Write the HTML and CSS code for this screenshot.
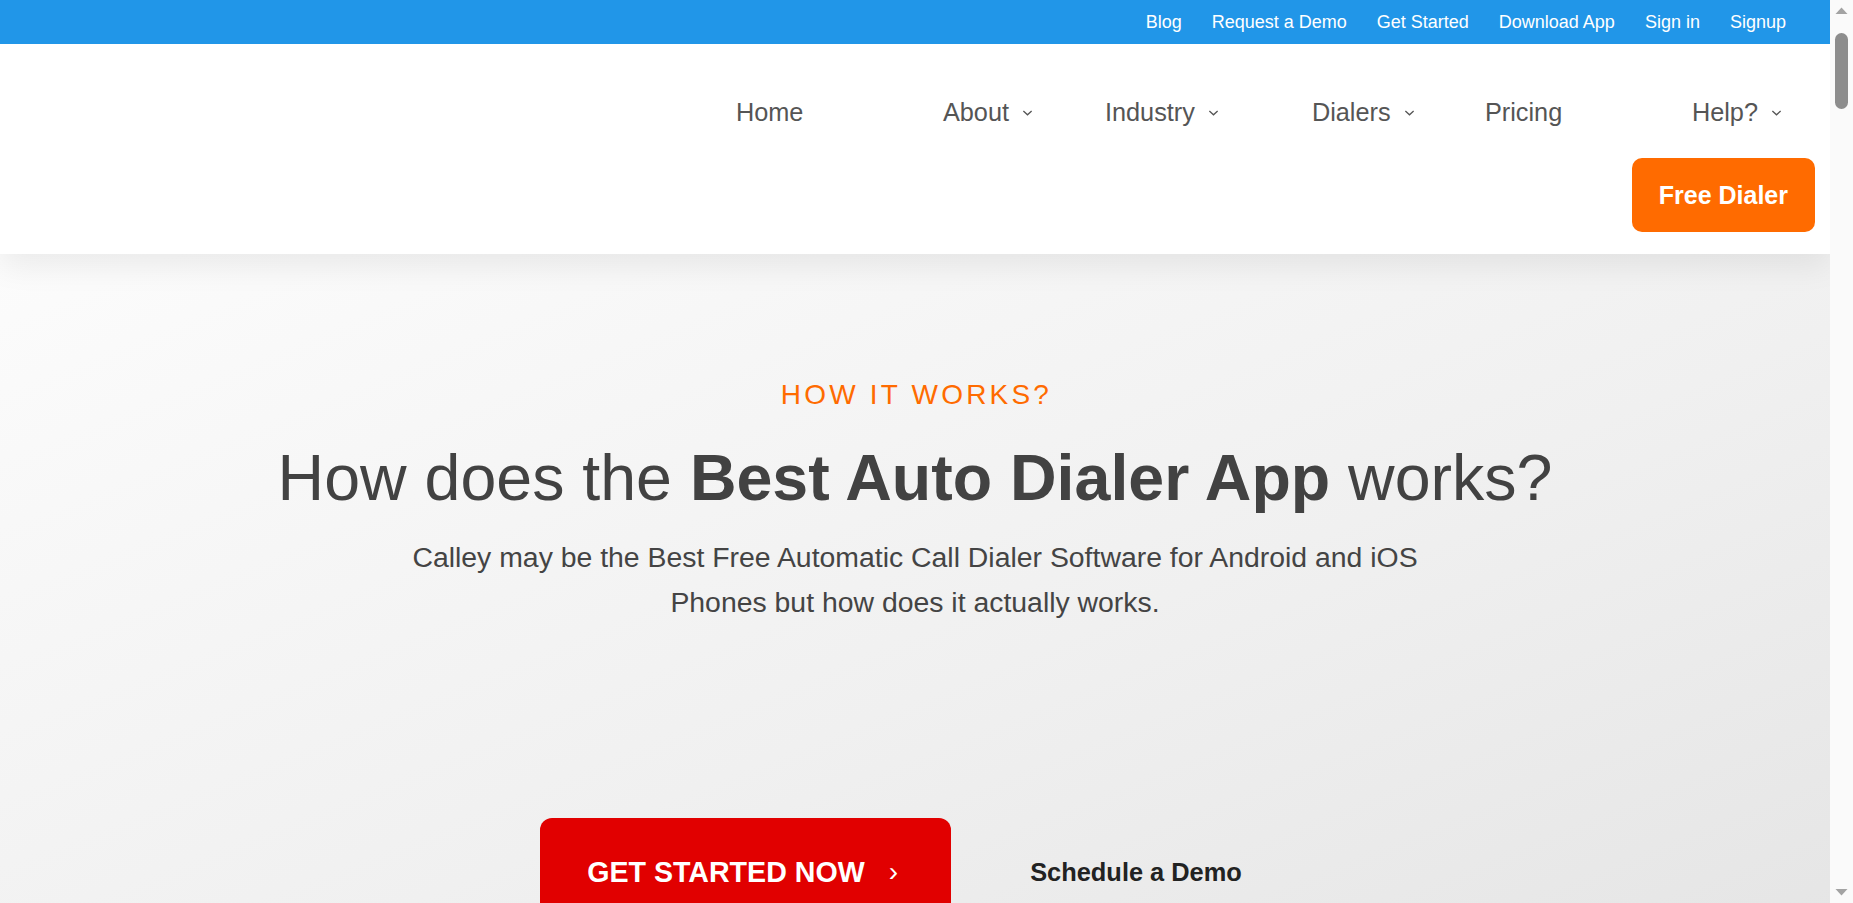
FILE: index.html
```html
<!DOCTYPE html>
<html lang="en">
<head>
<meta charset="utf-8">
<title>Calley - How it works</title>
<link rel="stylesheet" href="styles.css">
</head>
<body>
<header class="site-header">
  <div class="topbar">
    <a href="#">Blog</a>
    <a href="#">Request a Demo</a>
    <a href="#">Get Started</a>
    <a href="#">Download App</a>
    <a href="#">Sign in</a>
    <a href="#">Signup</a>
  </div>
  <nav class="mainnav">
    <ul class="menu">
      <li><a href="#">Home</a></li>
      <li><a href="#">About</a><svg class="chev" viewBox="0 0 12 8"><path d="M1.5 1.8 L6 6 L10.5 1.8"/></svg></li>
      <li><a href="#">Industry</a><svg class="chev" viewBox="0 0 12 8"><path d="M1.5 1.8 L6 6 L10.5 1.8"/></svg></li>
      <li><a href="#">Dialers</a><svg class="chev" viewBox="0 0 12 8"><path d="M1.5 1.8 L6 6 L10.5 1.8"/></svg></li>
      <li><a href="#">Pricing</a></li>
      <li><a href="#">Help?</a><svg class="chev" viewBox="0 0 12 8"><path d="M1.5 1.8 L6 6 L10.5 1.8"/></svg></li>
    </ul>
    <a class="free-btn" href="#">Free Dialer</a>
  </nav>
</header>
<main>
  <section class="hero">
    <p class="eyebrow">HOW IT WORKS?</p>
    <h1 class="title">How does the <strong>Best Auto Dialer App</strong> works?</h1>
    <p class="lead">Calley may be the Best Free Automatic Call Dialer Software for Android and iOS Phones but how does it actually works.</p>
    <div class="actions">
      <a class="start-btn" href="#">GET STARTED NOW <span class="arrow">›</span></a>
      <a class="demo-link" href="#">Schedule a Demo</a>
    </div>
  </section>
</main>
<div class="scrollbar" aria-hidden="true">
  <svg class="sb-arrow" viewBox="0 0 23 20"><path d="M5.5 14 L11.5 7.5 L17.5 14 Z"/></svg>
  <div class="sb-track"><div class="sb-thumb"></div></div>
  <svg class="sb-arrow" viewBox="0 0 23 20"><path d="M5.5 6 L11.5 12.5 L17.5 6 Z"/></svg>
</div>
</body>
</html>
```
FILE: styles.css
```css
* { box-sizing: border-box; }
html, body { margin: 0; padding: 0; }
body {
  font-family: "Liberation Sans", Arial, sans-serif;
  color: #444;
  background: #fff;
  margin-right: 23px;
}
a { text-decoration: none; color: inherit; }

/* imitation of the browser's classic scrollbar */
.scrollbar {
  position: fixed;
  top: 0;
  right: 0;
  width: 23px;
  height: 100vh;
  z-index: 10;
  background: #fafafa;
  display: flex;
  flex-direction: column;
}
.sb-arrow {
  width: 23px;
  height: 20px;
  fill: #a3a3a3;
  flex: none;
}
.sb-track {
  flex: 1;
  padding: 13px 0 0 5px;
}
.sb-thumb {
  width: 13px;
  height: 76px;
  border-radius: 7px;
  background: #8d8d8d;
}

.site-header {
  position: relative;
  z-index: 2;
  background: #fff;
  box-shadow: 0 12px 30px rgba(0, 0, 0, 0.07);
}

.topbar {
  height: 44px;
  background: #2196e8;
  display: flex;
  justify-content: flex-end;
  align-items: center;
  gap: 30px;
  padding-right: 44px;
}
.topbar a {
  color: #fff;
  font-size: 18px;
}

.mainnav {
  height: 210px;
  display: flex;
  flex-direction: column;
  align-items: flex-end;
  padding-top: 54px;
}
.menu {
  list-style: none;
  margin: 0;
  padding: 0 48px 0 0;
  display: grid;
  grid-template-columns: 207px 162px 207px 173px 207px auto;
}
.menu li {
  display: flex;
  align-items: center;
  gap: 13px;
  font-size: 25.3px;
  line-height: 29px;
  color: #555;
}
.chev {
  width: 11px;
  height: 8px;
  fill: none;
  stroke: #555;
  stroke-width: 1.4;
}
.free-btn {
  margin-top: 31px;
  margin-right: 15px;
  height: 74px;
  line-height: 74px;
  padding: 0 27px;
  border-radius: 10px;
  background: #ff6b00;
  color: #fff;
  font-weight: bold;
  font-size: 25px;
}

.hero {
  height: 740px;
  background: linear-gradient(to bottom right, #fcfcfc 0%, #f0f0f0 55%, #e4e4e4 100%);
  padding-top: 124px;
  display: flex;
  flex-direction: column;
  align-items: center;
  text-align: center;
}
.eyebrow {
  margin: 0;
  color: #ff6b00;
  font-size: 28px;
  line-height: 34px;
  letter-spacing: 3.2px;
  padding-left: 3px;
}
.title {
  margin: 28px 0 0;
  font-size: 64.5px;
  line-height: 77px;
  font-weight: normal;
  color: #424242;
}
.title strong { font-weight: bold; }
.lead {
  margin: 18px 0 0;
  max-width: 1030px;
  font-size: 28.4px;
  line-height: 45px;
  color: #444;
}
.actions {
  margin-top: 193px;
  display: flex;
  align-items: flex-start;
  gap: 79px;
}
.start-btn {
  display: flex;
  align-items: center;
  gap: 24px;
  width: 411px;
  height: 108px;
  padding: 0 0 0 47px;
  border-radius: 12px;
  background: #e10000;
  color: #fff;
  font-weight: bold;
  font-size: 28.6px;
}
.arrow {
  font-weight: normal;
  font-size: 28px;
}
.demo-link {
  margin-top: 40px;
  padding-right: 48px;
  font-weight: bold;
  font-size: 25.4px;
  line-height: 28px;
  color: #222;
}
```
